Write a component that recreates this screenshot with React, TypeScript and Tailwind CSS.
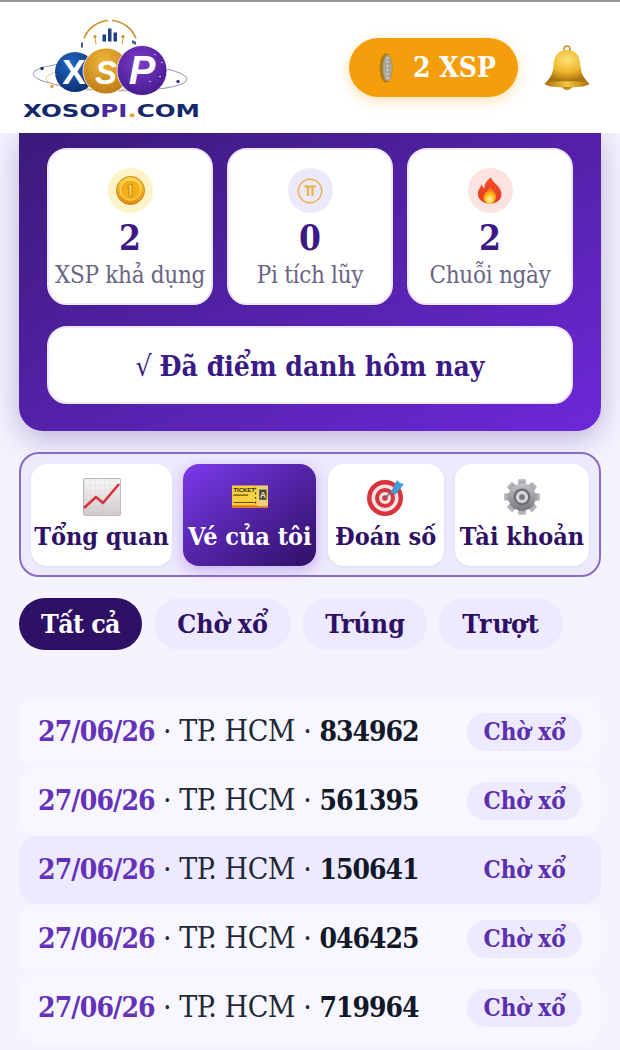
import React from "react";

function Logo() {
  return (
    <svg width="200" height="120" viewBox="0 7.5 200 120" className="shrink-0">
      <defs>
        <radialGradient id="lb" cx="40%" cy="30%" r="80%"><stop offset="0%" stopColor="#1f66c4" /><stop offset="100%" stopColor="#0c2a68" /></radialGradient>
        <radialGradient id="lg" cx="45%" cy="30%" r="80%"><stop offset="0%" stopColor="#f0b63c" /><stop offset="100%" stopColor="#b8730f" /></radialGradient>
        <radialGradient id="lp" cx="45%" cy="35%" r="80%"><stop offset="0%" stopColor="#7d3cc9" /><stop offset="100%" stopColor="#3c1485" /></radialGradient>
      </defs>
      <ellipse cx="110" cy="76" rx="77" ry="14" transform="rotate(2 110 76)" fill="none" stroke="#7b7f9d" strokeWidth="0.8" />
      <ellipse cx="106" cy="78" rx="60" ry="12" fill="none" stroke="#d9b778" strokeWidth="0.8" />
      <circle cx="42" cy="68" r="1.7" fill="#1c2f6e" /><circle cx="52" cy="86" r="1.7" fill="#d4a24a" /><circle cx="178" cy="81" r="1.7" fill="#4a2a90" />
      <path d="M84 38 A28 28 0 0 1 108 20" fill="none" stroke="#c9962e" strokeWidth="1.6" />
      <path d="M112 20 A28 28 0 0 1 136 38" fill="none" stroke="#c9962e" strokeWidth="1.6" />
      <path d="M82 47 V42 M133 43 V40 M135 44 V41" stroke="#1c2f6e" strokeWidth="1.6" />
      <rect x="102.500" y="34" width="3.500" height="7" fill="#1c3f88" /><rect x="108" y="28" width="3.500" height="13" fill="#1c3f88" /><rect x="113.500" y="32" width="3.500" height="9" fill="#1c3f88" />
      <path d="M95 37 L96 44 M123 37 L122 44" stroke="#c9962e" strokeWidth="0.9" /><circle cx="95" cy="36" r="1.600" fill="#c9962e" /><circle cx="123" cy="36" r="1.600" fill="#c9962e" />
      <circle cx="75" cy="71.500" r="20" fill="url(#lb)" />
      <circle cx="106" cy="70.500" r="23" fill="url(#lg)" stroke="#fff" strokeWidth="0.8" />
      <circle cx="142" cy="70" r="25" fill="url(#lp)" stroke="#fff" strokeWidth="0.8" />
      <circle cx="162" cy="62" r="0.8" fill="#e5d4ff" /><circle cx="155" cy="54" r="0.7" fill="#e5d4ff" /><circle cx="150" cy="81" r="0.8" fill="#e5d4ff" /><circle cx="160" cy="76" r="0.8" fill="#e5d4ff" />
      <text x="74" y="83" textAnchor="middle" fontFamily="'Liberation Sans',sans-serif" fontWeight="700" fontSize="35" fill="#fff">X</text>
      <text x="106" y="83" textAnchor="middle" fontFamily="'Liberation Sans',sans-serif" fontWeight="700" fontStyle="italic" fontSize="33" fill="#fff">S</text>
      <text x="142" y="83" textAnchor="middle" fontFamily="'Liberation Sans',sans-serif" fontWeight="700" fontStyle="italic" fontSize="40" fill="#fff">P</text>
      <text x="23" y="116" fontFamily="'DejaVu Sans',sans-serif" fontWeight="700" fontSize="18.500" textLength="177" lengthAdjust="spacingAndGlyphs">
        <tspan fill="#14296b">XOSO</tspan><tspan fill="#4a2a9c">PI</tspan><tspan fill="#e0a52e">.</tspan><tspan fill="#14296b">COM</tspan>
      </text>
    </svg>
  );
}

function Bell() {
  return (
    <svg width="46" height="46" viewBox="0 0 46 46">
      <defs>
        <radialGradient id="bg" cx="50%" cy="30%" r="65%"><stop offset="0%" stopColor="#ffe27a" /><stop offset="55%" stopColor="#eeb92e" /><stop offset="100%" stopColor="#a9730f" /></radialGradient>
        <linearGradient id="bb" x1="0" x2="1" y1="0" y2="0"><stop offset="0%" stopColor="#a86f10" /><stop offset="50%" stopColor="#f3c53f" /><stop offset="100%" stopColor="#a86f10" /></linearGradient>
      </defs>
      <circle cx="23" cy="4" r="3" fill="none" stroke="#c8941f" strokeWidth="1.6" />
      <path d="M23 5 C13 5 10 12 9.500 21 C9 29 6 33 1.500 38 L44.500 38 C40 33 37 29 36.500 21 C36 12 33 5 23 5Z" fill="url(#bg)" />
      <path d="M0.500 38 C8 35.500 38 35.500 45.500 38 C45.500 41 36 42.500 23 42.500 C10 42.500 0.500 41 0.500 38Z" fill="url(#bb)" />
      <path d="M18 42 C20 46 26 46 28 42Z" fill="#c48a18" />
    </svg>
  );
}

function Coin1() {
  return (
    <svg width="29" height="29" viewBox="0 0 30 30">
      <defs><linearGradient id="c1" x1="0" x2="0" y1="0" y2="1"><stop offset="0%" stopColor="#ffd84a" /><stop offset="100%" stopColor="#e58a0c" /></linearGradient></defs>
      <circle cx="15" cy="15" r="14.500" fill="url(#c1)" stroke="#c77f10" strokeWidth="1" />
      <circle cx="15" cy="14.500" r="10.500" fill="#f4ae18" stroke="#ffe076" strokeWidth="1" />
      <path d="M12.500 10 L16.500 8.500 V21 H13.500 V12 L12.500 12.500Z" fill="#ffd95a" stroke="#b8720e" strokeWidth="0.8" />
    </svg>
  );
}

function PiIcon() {
  return (
    <svg width="26" height="26" viewBox="0 0 26 26" fill="none" stroke="#eab04c" strokeWidth="1.500">
      <circle cx="13" cy="13" r="11.700" />
      <path d="M7.500 9 C9 7.800 10 8.500 12 8.500 H19" strokeWidth="2" />
      <path d="M11 9 V18 M15.500 9 V18" strokeWidth="2.200" />
    </svg>
  );
}

function Fire() {
  return (
    <svg width="26" height="28" viewBox="0 0 28 30">
      <defs>
        <linearGradient id="f1" x1="0" x2="0" y1="0" y2="1"><stop offset="0%" stopColor="#f0502a" /><stop offset="100%" stopColor="#e8391f" /></linearGradient>
        <radialGradient id="f2" cx="50%" cy="75%" r="60%"><stop offset="0%" stopColor="#fff6b0" /><stop offset="55%" stopColor="#ffc21e" /><stop offset="100%" stopColor="#ff7a14" /></radialGradient>
      </defs>
      <path d="M15 0.500 C17 6 24 9 26 16 C28 24 21 28.500 14 28.500 C6 28.500 0.500 24 1 17 C1.300 13 4 10.500 5 8 C6 10 6.500 11.500 8 12 C8 7 10.500 3.500 15 0.500Z" fill="url(#f1)" />
      <path d="M14 11 C16 14 21 17 20.500 21.500 C20 26 17 28.500 14 28.500 C10 28.500 6.500 26 7 21.500 C7.400 17.500 12 15 14 11Z" fill="url(#f2)" />
    </svg>
  );
}

function Chart() {
  const g = [0, 1, 2, 3, 4, 5, 6, 7];
  return (
    <svg width="38" height="38" viewBox="0 0 38 38">
      <defs><linearGradient id="cg" x1="0" x2="0" y1="0" y2="1"><stop offset="0%" stopColor="#faf9f9" /><stop offset="100%" stopColor="#cfc9c9" /></linearGradient></defs>
      <rect x="0.500" y="0.500" width="37" height="37" rx="1.500" fill="url(#cg)" stroke="#bdb6b6" />
      {g.map((i) => (
        <path key={i} d={`M${i * 5 + 2} 1 V37 M1 ${i * 5 + 2} H37`} stroke="#d9d3d3" strokeWidth="0.4" />
      ))}
      <path d="M1 30 L13 19 L20 25 L36 6" fill="none" stroke="#d9323c" strokeWidth="2.600" strokeLinejoin="round" />
    </svg>
  );
}

function Ticket() {
  return (
    <svg width="38" height="23" viewBox="0 0 40 25">
      <rect x="0.500" y="0.500" width="39" height="23" fill="#f7d23c" />
      <rect x="0.500" y="22" width="39" height="3" fill="#e07a1c" />
      <rect x="28" y="1" width="11" height="22" fill="#e9cf7e" />
      <rect x="30" y="5" width="8" height="11" fill="#4a4436" />
      <text x="34" y="14" textAnchor="middle" fontSize="9" fontWeight="700" fill="#f2e5b8" fontFamily="'Liberation Sans',sans-serif">A</text>
      <text x="2" y="8" fontSize="6.500" fontWeight="700" fill="#2a2413" fontFamily="'Liberation Sans',sans-serif">TICKET</text>
      <path d="M26 3 V22" stroke="#5c4a10" strokeWidth="1.400" strokeDasharray="2 3" />
      <path d="M2 11 H18 M2 19 H25" stroke="#5c4a10" strokeWidth="1.200" />
    </svg>
  );
}

function Target() {
  return (
    <svg width="38" height="38" viewBox="0 0 38 38">
      <circle cx="18" cy="20" r="18" fill="#d8343e" />
      <circle cx="18" cy="20" r="13.500" fill="#f3e4e4" />
      <circle cx="18" cy="20" r="10" fill="#d8343e" />
      <circle cx="18" cy="20" r="6" fill="#f3e4e4" />
      <circle cx="18" cy="20" r="2.800" fill="#d8343e" />
      <path d="M18 20 L31 7" stroke="#6d6f78" strokeWidth="1.500" />
      <path d="M24 14 L30 2 L33 5 L37 6 L28 17Z" fill="#3f9ed8" />
    </svg>
  );
}

function Gear() {
  const t = [0, 45, 90, 135, 180, 225, 270, 315];
  return (
    <svg width="36" height="38" viewBox="0 0 38 40">
      <defs><linearGradient id="gr" x1="0" x2="0" y1="0" y2="1"><stop offset="0%" stopColor="#c4c4c8" /><stop offset="100%" stopColor="#77777d" /></linearGradient></defs>
      {t.map((a) => (
        <rect key={a} x="15" y="1" width="8" height="10" rx="1.500" fill="url(#gr)" transform={`rotate(${a} 19 20)`} />
      ))}
      <circle cx="19" cy="20" r="14.500" fill="url(#gr)" />
      <circle cx="19" cy="20" r="9" fill="#6e6e74" />
      <circle cx="19" cy="20" r="6.500" fill="#d6d6da" />
      <circle cx="19" cy="20" r="3" fill="#77777d" />
    </svg>
  );
}

function EdgeCoin() {
  return (
    <svg width="14" height="30" viewBox="0 0 14 30" className="shrink-0">
      <ellipse cx="7" cy="15" rx="6.500" ry="14.500" fill="#a9801c" />
      <ellipse cx="8.500" cy="15" rx="4.500" ry="13" fill="#a9a69c" />
      <path d="M8.500 4 V26" stroke="#d8d6cf" strokeWidth="1.500" strokeDasharray="2 2" />
      <path d="M12.500 6 C13.800 11 13.800 19 12.500 24" fill="none" stroke="#c99a28" strokeWidth="1" />
    </svg>
  );
}

const stats = [
  { v: "2", l: "XSP khả dụng", c: "bg-[#fdf3c7]", i: <Coin1 /> },
  { v: "0", l: "Pi tích lũy", c: "bg-[#ebe9fb]", i: <PiIcon /> },
  { v: "2", l: "Chuỗi ngày", c: "bg-[#fbe3e1]", i: <Fire /> },
];

const tabs = [
  { l: "Tổng quan", w: "w-[141px]", i: <Chart />, a: false },
  { l: "Vé của tôi", w: "w-[133px]", i: <Ticket />, a: true },
  { l: "Đoán số", w: "w-[116px]", i: <Target />, a: false },
  { l: "Tài khoản", w: "w-[134px]", i: <Gear />, a: false },
];

const filters = [
  { l: "Tất cả", w: "w-[123px]", a: true, t: "tracking-[-0.6px]" },
  { l: "Chờ xổ", w: "w-[137px]", a: false, t: "tracking-[0px]" },
  { l: "Trúng", w: "w-[124px]", a: false, t: "tracking-[0px]" },
  { l: "Trượt", w: "w-[124px]", a: false, t: "tracking-[1px]" },
];

const rows = ["834962", "561395", "150641", "046425", "719964"];

export default function App() {
  return (
    <div className="h-[1050px] w-[620px] overflow-hidden bg-[#f5f3ff] font-['DejaVu_Serif_Condensed','DejaVu_Serif',serif] [font-stretch:condensed]">
      <header className="relative z-10 flex h-[133px] items-center border-t-2 border-[#9a9a9a] bg-white pr-[30px]">
        <Logo />
        <div className="ml-auto flex h-[59px] w-[169px] items-center gap-[20px] rounded-full bg-[#f59e0b] pl-[30px] shadow-[0_4px_14px_rgba(245,158,11,0.3)]">
          <EdgeCoin />
          <span className="whitespace-nowrap text-[28px] font-bold text-white">2 XSP</span>
        </div>
        <div className="ml-[26px]"><Bell /></div>
      </header>

      <section className="mx-[19px] flex h-[298px] flex-col gap-[21px] rounded-b-[24px] bg-linear-to-br from-[#3b1a7a] to-[#6d28d9] px-[28px] pt-[15px] shadow-[0_8px_30px_rgba(59,26,122,0.3)]">
        <div className="flex gap-[14px]">
          {stats.map((s) => (
            <div key={s.l} className="flex h-[157px] w-[166px] flex-col items-center rounded-[20px] border-2 border-[#efe6ff] bg-white pt-[18px]">
              <div className={`flex h-[45px] w-[45px] items-center justify-center rounded-full ${s.c}`}>{s.i}</div>
              <div className="mt-[3px] text-[35px] leading-[44px] font-bold text-[#3b1a85]">{s.v}</div>
              <div className="whitespace-nowrap text-[24px] leading-[30px] tracking-[-0.3px] text-[#6b6485]">{s.l}</div>
            </div>
          ))}
        </div>
        <button className="flex h-[78px] w-full items-center justify-center gap-[8px] rounded-[20px] border-2 border-[#efe6ff] bg-white pt-[4px] whitespace-nowrap text-[28px] font-bold text-[#3b1a85]">
          <span className="font-normal">√</span>
          <span>Đã điểm danh hôm nay</span>
        </button>
      </section>

      <nav className="mx-[19px] mt-[21px] flex h-[125px] items-center justify-between rounded-[20px] border-2 border-[#8b6cc4] bg-[#ede9fe] px-[10px]">
        {tabs.map((t) => (
          <div
            key={t.l}
            className={`flex h-[102px] ${t.w} flex-col items-center rounded-[16px] pt-[14px] ${t.a ? "bg-linear-to-br from-[#7c3aed] to-[#2e1065] text-white shadow-[0_4px_14px_rgba(109,40,217,0.3)]" : "bg-white text-[#2e1065] shadow-[0_1px_4px_rgba(46,16,101,0.06)]"}`}
          >
            <div className="flex h-[38px] items-center">{t.i}</div>
            <div className="mt-[4px] whitespace-nowrap text-[25px] leading-[34px] font-bold">{t.l}</div>
          </div>
        ))}
      </nav>

      <div className="mx-[19px] mt-[21px] flex gap-[12px]">
        {filters.map((f) => (
          <div
            key={f.l}
            className={`flex h-[52px] ${f.w} items-center justify-center rounded-full text-[26.5px] font-bold ${f.t} ${f.a ? "bg-[#2e1065] text-white" : "bg-[#ede9fe] text-[#2e1065]"}`}
          >
            {f.l}
          </div>
        ))}
      </div>

      <div className="mx-[19px] mt-[48px] flex flex-col gap-px">
        {rows.map((n, i) => (
          <div key={n} className={`flex h-[68px] items-center justify-between rounded-[18px] pr-[19px] pl-[19px] ${i === 2 ? "bg-[#ede9fe]" : "bg-[#f8f6ff]"}`}>
            <div className="flex items-baseline whitespace-pre pb-[3px] text-[30px] text-[#1f2937]">
              <span className="text-[28px] font-bold tracking-[-0.85px] text-[#6432b8]">27/06/26</span>
              <span className="tracking-[-0.45px]"> · TP. HCM · </span>
              <span className="text-[28px] font-bold tracking-[-1px] text-[#111827]">{n}</span>
            </div>
            <div className="flex h-[38px] w-[115px] items-center justify-center rounded-full bg-[#ede9fe] text-[24px] font-bold text-[#5b2fb0]">Chờ xổ</div>
          </div>
        ))}
      </div>
    </div>
  );
}
